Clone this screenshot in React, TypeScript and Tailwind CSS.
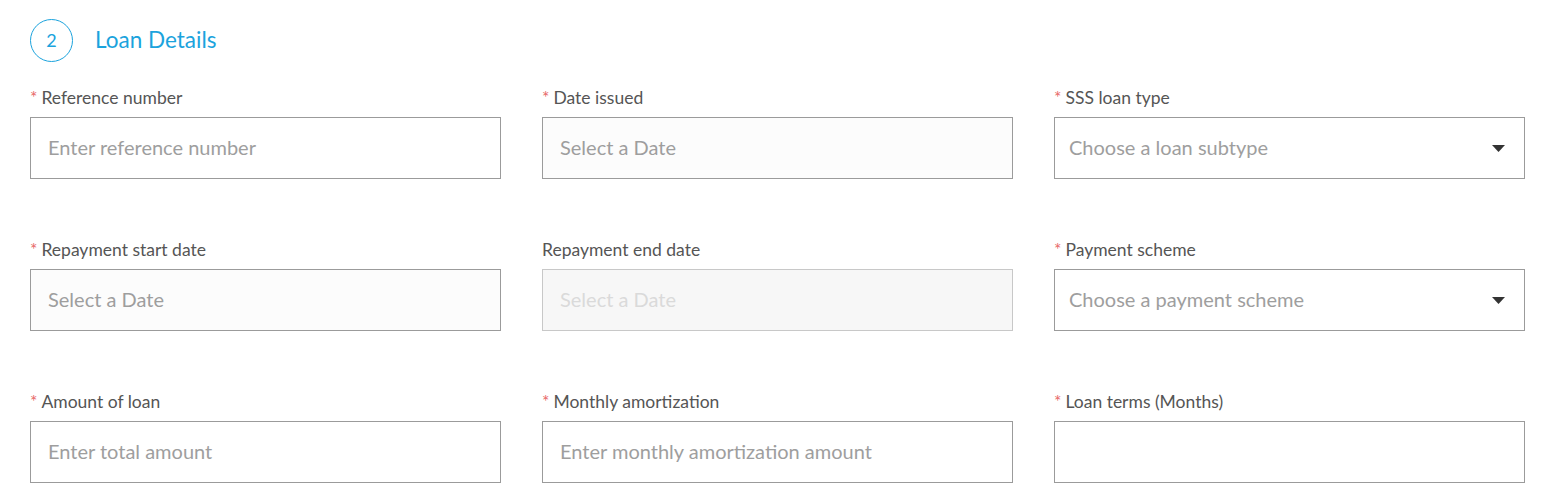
import React from 'react'

type Field = {
  label: string
  required?: boolean
  placeholder?: string
  kind?: 'text' | 'date' | 'select' | 'disabled'
}

const fields: Field[] = [
  { label: 'Reference number', required: true, placeholder: 'Enter reference number' },
  { label: 'Date issued', required: true, placeholder: 'Select a Date', kind: 'date' },
  { label: 'SSS loan type', required: true, placeholder: 'Choose a loan subtype', kind: 'select' },
  { label: 'Repayment start date', required: true, placeholder: 'Select a Date', kind: 'date' },
  { label: 'Repayment end date', placeholder: 'Select a Date', kind: 'disabled' },
  { label: 'Payment scheme', required: true, placeholder: 'Choose a payment scheme', kind: 'select' },
  { label: 'Amount of loan', required: true, placeholder: 'Enter total amount' },
  { label: 'Monthly amortization', required: true, placeholder: 'Enter monthly amortization amount' },
  { label: 'Loan terms (Months)', required: true, placeholder: '' },
]

function Caret() {
  return (
    <svg width="13" height="7" viewBox="0 0 13 7" aria-hidden="true">
      <path d="M0 0h13L6.5 7z" fill="#333" />
    </svg>
  )
}

function FormField({ f }: { f: Field }) {
  const kind = f.kind ?? 'text'
  const box = {
    text: 'pl-[17px] border-[#9b9b9b] bg-white text-[#9e9e9e]',
    date: 'pl-[17px] border-[#9b9b9b] bg-[#fcfcfc] text-[#9e9e9e]',
    select: 'pl-[14px] border-[#9b9b9b] bg-white text-[#9e9e9e]',
    disabled: 'pl-[17px] border-[#c8c8c8] bg-[#f7f7f7] text-[#dadada]',
  }[kind]

  return (
    <div className="flex flex-col">
      <div className="h-5 text-[17.5px] leading-5 text-[#555]">
        {f.required && <span className="mr-1 text-[#e86a6a]">*</span>}
        {f.label}
      </div>
      <div
        className={`mt-[9px] flex h-[62px] items-center justify-between border pr-[19px] text-[20px] ${box}`}
      >
        <span className="-mt-[3px]">{f.placeholder}</span>
        {kind === 'select' && <Caret />}
      </div>
    </div>
  )
}

export default function App() {
  return (
    <div className="min-h-[502px] bg-white pl-[30px] pr-[28px] pt-[19px] font-['Lato','Noto_Sans',sans-serif]">
      <div className="flex items-center">
        <div className="flex h-[43px] w-[43px] items-center justify-center rounded-full border border-[#1ba3dd] text-[18px] text-[#1ba3dd]">
          2
        </div>
        <h2 className="-mt-px ml-[22px] text-[22.5px] text-[#1ba3dd]">Loan Details</h2>
      </div>
      <div className="mt-[26px] grid grid-cols-3 gap-x-[41px] gap-y-[61px]">
        {fields.map((f) => (
          <FormField key={f.label} f={f} />
        ))}
      </div>
    </div>
  )
}
